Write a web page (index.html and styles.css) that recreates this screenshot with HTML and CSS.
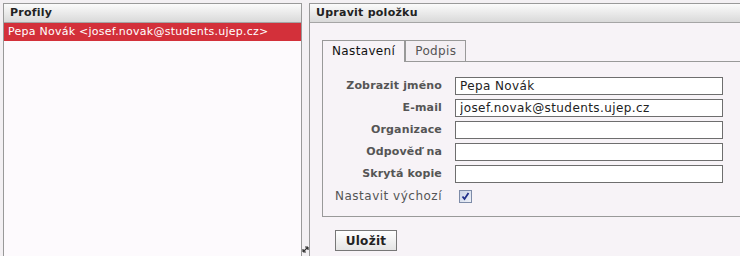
FILE: index.html
```html
<!DOCTYPE html>
<html lang="cs">

<head>
    <meta charset="UTF-8">
    <title>Profily</title>
    <link rel="stylesheet" href="styles.css">
</head>

<body>

    <div class="app">
        <div class="profiles">
            <div class="panel-head">Profily</div>
            <div class="profile-row selected">Pepa Novák &lt;josef.novak@students.ujep.cz&gt;</div>
        </div>

        <div class="splitter">
            <svg class="resize" width="7" height="7" viewBox="0 0 7 7">
                <path d="M1 6 L6 1 M1 6 L1 3 M1 6 L4 6 M6 1 L6 4 M6 1 L3 1" stroke="#333" stroke-width="1.2" fill="none"/>
            </svg>
        </div>

        <div class="editor">
            <div class="panel-head">Upravit položku</div>

            <div class="editor-body">
                <div class="tabs">
                    <div class="tab active">Nastavení</div>
                    <div class="tab">Podpis</div>
                </div>

                <div class="tab-body">
                    <div class="form">
                        <label class="lbl">Zobrazit jméno</label>
                        <input class="txt" type="text" value="Pepa Novák">

                        <label class="lbl">E-mail</label>
                        <input class="txt" type="text" value="josef.novak@students.ujep.cz">

                        <label class="lbl">Organizace</label>
                        <input class="txt" type="text" value="">

                        <label class="lbl">Odpověď na</label>
                        <input class="txt" type="text" value="">

                        <label class="lbl">Skrytá kopie</label>
                        <input class="txt" type="text" value="">

                        <label class="lbl plain">Nastavit výchozí</label>
                        <div class="check-cell">
                            <span class="check">
                                <svg width="11" height="11" viewBox="0 0 11 11">
                                    <path d="M2.5 5.5 L4.5 8 L8.5 2" stroke="#1f2f8a" stroke-width="1.8" fill="none"/>
                                </svg>
                            </span>
                        </div>
                    </div>
                </div>

                <button class="save">Uložit</button>
            </div>
        </div>
    </div>

</body>

</html>
```

FILE: styles.css
```css
body {
    font-family: "DejaVu Sans", Verdana, sans-serif;
    font-size: 11px;
    letter-spacing: 0.25px;
    margin: 0;
    padding: 0;
    background-color: #f3f0f3;
    overflow: hidden;
}

.app {
    display: flex;
    height: 256px;
    padding: 3px 0 0 3px;
    box-sizing: border-box;
}

.profiles {
    width: 297px;
    border: 1px solid #999;
    border-bottom: none;
    background-color: #fdfafd;
}

.panel-head {
    height: 18px;
    line-height: 18px;
    padding-left: 6px;
    font-weight: bold;
    color: #222;
    background: linear-gradient(to bottom, #fbfbfb, #d9d9d9);
    border-bottom: 1px solid #a5a5a5;
}

.profile-row {
    height: 18px;
    line-height: 18px;
    padding-left: 4px;
    color: #222;
}

.profile-row.selected {
    background-color: #d3303a;
    color: #fff;
}

.splitter {
    width: 7px;
    display: flex;
    align-items: flex-end;
    justify-content: center;
}

.resize {
    margin-bottom: 3px;
}

.editor {
    flex: 1;
    border-left: 1px solid #999;
    border-top: 1px solid #999;
    background-color: #f7f3f7;
    overflow: hidden;
}

.editor-body {
    padding: 16px 0 0 12px;
}

.tabs {
    display: flex;
    align-items: flex-end;
    height: 22px;
}

.tab {
    height: 20px;
    line-height: 20px;
    padding: 0 9px 0 9px;
    font-size: 12px;
    letter-spacing: 0.35px;
    color: #555;
    border: 1px solid #999;
    border-bottom: none;
    background-color: #f3eff3;
}

.tab.active {
    height: 21px;
    color: #111;
    background-color: #f7f3f7;
    position: relative;
    margin-bottom: -1px;
    z-index: 1;
}

.tab-body {
    width: 440px;
    border: 1px solid #999;
    padding: 15px 0 11px 12px;
}

.form {
    display: grid;
    grid-template-columns: max-content 268px;
    column-gap: 13px;
    row-gap: 4px;
}

.lbl {
    height: 18px;
    line-height: 18px;
    text-align: right;
    font-weight: bold;
    letter-spacing: 0.15px;
    color: #555;
}

.lbl.plain {
    font-weight: normal;
    text-align: left;
    font-size: 12px;
    letter-spacing: 0.5px;
}

.txt {
    height: 18px;
    box-sizing: border-box;
    margin: 0;
    padding: 0 0 0 4px;
    border: 1px solid #6e6e6e;
    background-color: #fff;
    font-family: "DejaVu Sans", Verdana, sans-serif;
    font-size: 12px;
    letter-spacing: 0.4px;
    color: #222;
    outline: none;
}

.check-cell {
    height: 18px;
    display: flex;
    align-items: center;
    padding-left: 4px;
}

.check {
    width: 11px;
    height: 11px;
    border: 1px solid #7d8ba8;
    background: linear-gradient(to bottom right, #c9d3e6, #eef1f8);
    display: flex;
}

.save {
    margin: 13px 0 0 13px;
    width: 62px;
    height: 21px;
    padding: 0;
    font-family: "DejaVu Sans", Verdana, sans-serif;
    font-size: 12px;
    font-weight: bold;
    letter-spacing: 0.3px;
    color: #222;
    border: 1px solid #777;
    border-radius: 0;
    background: linear-gradient(to bottom, #ffffff, #e4e4e4);
}
```
